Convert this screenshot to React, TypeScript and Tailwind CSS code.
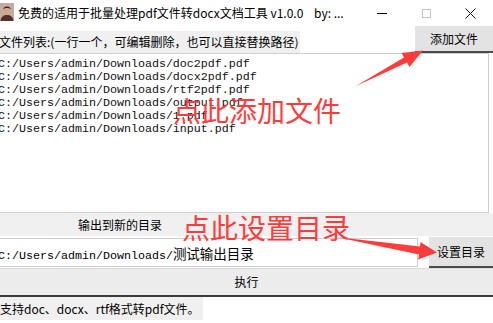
import React from "react";

const files = [
  "C:/Users/admin/Downloads/doc2pdf.pdf",
  "C:/Users/admin/Downloads/docx2pdf.pdf",
  "C:/Users/admin/Downloads/rtf2pdf.pdf",
  "C:/Users/admin/Downloads/output.pdf",
  "C:/Users/admin/Downloads/1.pdf",
  "C:/Users/admin/Downloads/input.pdf",
];

const ui = "font-['Segoe_UI','Noto_Sans_CJK_SC',sans-serif]";
const mono = "font-['Liberation_Mono','Noto_Sans_CJK_SC',monospace]";

const AppIcon = () => (
  <svg width="14" height="18" viewBox="0 0 14 18">
    <rect width="14" height="18" fill="#c4aca0" />
    <ellipse cx="7" cy="7" rx="3.6" ry="4.2" fill="#d8a48c" />
    <path d="M3.2 6.5 C3 2.5 11 2.5 10.8 6.5 C10 4.5 4 4.5 3.2 6.5Z" fill="#3a2620" />
    <path d="M0.5 18 C1 13 4 12 7 12 C10 12 13 13 13.5 18Z" fill="#5a2e2a" />
  </svg>
);

const TitleBar = () => (
  <div className={`flex items-center h-[26px] bg-white ${ui}`}>
    <div className="mt-[-3px]">
      <AppIcon />
    </div>
    <span className="ml-[4px] text-[12px] text-black whitespace-nowrap">
      免费的适用于批量处理pdf文件转docx文档工具 v1.0.0&nbsp;&nbsp;&nbsp;&nbsp;by: ...
    </span>
    <div className="ml-auto flex h-full">
      <div className="w-[45px] flex items-center justify-center">
        <div className="w-[10px] h-[1px] bg-black" />
      </div>
      <div className="w-[44px] flex items-center justify-center">
        <div className="w-[9px] h-[9px] border border-[#c4c4c4]" />
      </div>
      <div className="w-[45px] flex items-center justify-center">
        <svg width="11" height="11" viewBox="0 0 11 11">
          <path d="M0.5 0.5 L10.5 10.5 M10.5 0.5 L0.5 10.5" stroke="#111" strokeWidth="1" />
        </svg>
      </div>
    </div>
  </div>
);

export default function App() {
  return (
    <div className={`relative w-[493px] h-[323px] overflow-hidden bg-white text-black ${ui}`}>
      <TitleBar />

      {/* file list header */}
      <div className="flex items-end h-[27px]">
        <div className="h-[22px] w-[301px] -ml-[1px] bg-[#f0f0f0] text-[12px] leading-[22px] whitespace-nowrap">
          文件列表:(一行一个，可编辑删除，也可以直接替换路径)
        </div>
        <div className="ml-auto w-[78px] h-[27px] bg-[#e3e3e3] border-b-2 border-[#4a4a4a] flex items-center justify-center text-[12px]">
          添加文件
        </div>
      </div>

      {/* file list */}
      <div className="w-[489px] h-[160px] border border-l-0 border-[#cfcfcf] pt-[4px] bg-white">
        {files.map((f, i) => (
          <div key={i} className={`-ml-[2px] text-[11.67px] leading-[13px] whitespace-nowrap text-[#111] ${mono}`}>
            {f}
          </div>
        ))}
      </div>

      <div className="h-[23px] bg-[#f0f0f0] pl-[78px] text-[12px] leading-[23px]">输出到新的目录</div>

      <div className="flex h-[32px]">
        <div className="mt-[2px] w-[418px] h-[29px] border border-l-0 border-[#cfcfcf] bg-white pt-[1px]">
          <span className={`-ml-[2px] text-[11.67px] leading-[15px] whitespace-nowrap ${mono}`}>
            C:/Users/admin/Downloads/<span className="text-[13.5px]">测试输出目录</span>
          </span>
        </div>
        <div className="ml-auto mt-[1px] w-[64px] h-[31px] bg-[#e3e3e3] border-b-2 border-[#4a4a4a] flex items-center justify-center text-[12px]">
          设置目录
        </div>
      </div>

      <div className="h-[29px] bg-[#ececec] border-t border-[#dcdcdc] border-b-2 border-b-[#3c3c3c] flex items-center justify-center text-[12px]">
        执行
      </div>

      <div className="w-[203px] h-[23px] bg-[#f0f0f0] text-[12px] leading-[23px] whitespace-nowrap">
        支持doc、docx、rtf格式转pdf文件。
      </div>

      {/* red annotations */}
      <div className="absolute left-[173px] top-[92px] text-[28px] leading-[36px] text-[#ff3b3b] whitespace-nowrap font-['Noto_Sans_CJK_SC',sans-serif]">
        点此添加文件
      </div>
      <div className="absolute left-[182px] top-[209px] text-[28px] leading-[36px] text-[#ff3b3b] whitespace-nowrap font-['Noto_Sans_CJK_SC',sans-serif]">
        点此设置目录
      </div>
      <svg className="absolute left-0 top-0" width="493" height="323" viewBox="0 0 493 323">
        <polygon points="356,86 404,57.5 401.5,53 423,50.5 409.5,67 407,62.5" fill="#ff3b3b" />
        <polygon points="336,237 420,246.5 420.5,242 437,252.5 418,259.5 419,254.5" fill="#ff3b3b" />
      </svg>
    </div>
  );
}
